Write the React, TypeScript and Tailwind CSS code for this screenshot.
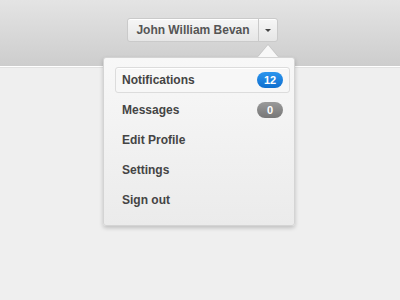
import { useState } from 'react';

interface MenuItem {
  label: string;
  badge?: number;
  badgeTone?: 'blue' | 'gray';
}

const items: MenuItem[] = [
  { label: 'Notifications', badge: 12, badgeTone: 'blue' },
  { label: 'Messages', badge: 0, badgeTone: 'gray' },
  { label: 'Edit Profile' },
  { label: 'Settings' },
  { label: 'Sign out' },
];

export default function App() {
  const [active] = useState(0);

  return (
    <div
      className="min-h-screen bg-[#efefef] text-[12px] font-bold"
      style={{ fontFamily: '"Liberation Sans", Arial, sans-serif' }}
    >
      {/* Header bar */}
      <div className="h-[67px] bg-gradient-to-b from-[#e4e4e4] to-[#cdcdcd] border-b border-white shadow-[0_1px_0_#e2e2e2] flex justify-center pt-[18px]">
        <div className="relative flex h-[24px] ml-[5px]">
          <button className="h-full w-[132px] rounded-l-[3px] border border-[#cacaca] bg-gradient-to-b from-[#f6f6f6] to-[#e6e6e6] text-[#555] shadow-[inset_0_1px_0_#fff] flex items-center justify-center">
            John William Bevan
          </button>
          <button className="h-full w-[20px] -ml-px rounded-r-[3px] border border-[#cacaca] bg-gradient-to-b from-[#f6f6f6] to-[#e6e6e6] shadow-[inset_0_1px_0_#fff] flex items-center justify-center">
            <span className="block w-0 h-0 border-l-[3px] border-r-[3px] border-t-[3px] border-l-transparent border-r-transparent border-t-[#444]" />
          </button>

          {/* Dropdown */}
          <div className="absolute left-[-24px] top-[39px] w-[192px]">
            <div className="absolute right-[17px] -top-[12px] w-0 h-0 border-l-[10px] border-r-[10px] border-b-[12px] border-l-transparent border-r-transparent border-b-[#f8f8f8] drop-shadow-[0_-1px_0_rgba(0,0,0,0.08)]" />
            <div className="rounded-[3px] border border-[#d4d4d4] bg-gradient-to-b from-[#f8f8f8] to-[#ebebeb] shadow-[0_2px_4px_rgba(0,0,0,0.2)] pl-[11px] pr-[4px] pt-[7px] pb-[10px] flex flex-col">
              {items.map((item, i) => (
                <div
                  key={item.label}
                  className={`flex items-center justify-between pl-[6px] pr-[6px] rounded-[3px] border ${
                    i === active
                      ? 'h-[26px] my-[2px] border-[#dcdcdc] bg-[#f7f7f7] shadow-[inset_0_1px_0_#fff]'
                      : 'h-[30px] border-transparent'
                  }`}
                >
                  <span className="text-[#444]">{item.label}</span>
                  {item.badge !== undefined && (
                    <span
                      className={`h-[16px] w-[26px] rounded-full text-white text-[11px] flex items-center justify-center ${
                        item.badgeTone === 'blue'
                          ? 'bg-gradient-to-b from-[#2b95ee] to-[#0f6fcf]'
                          : 'bg-gradient-to-b from-[#9a9a9a] to-[#777]'
                      }`}
                    >
                      {item.badge}
                    </span>
                  )}
                </div>
              ))}
            </div>
          </div>
        </div>
      </div>
    </div>
  );
}
